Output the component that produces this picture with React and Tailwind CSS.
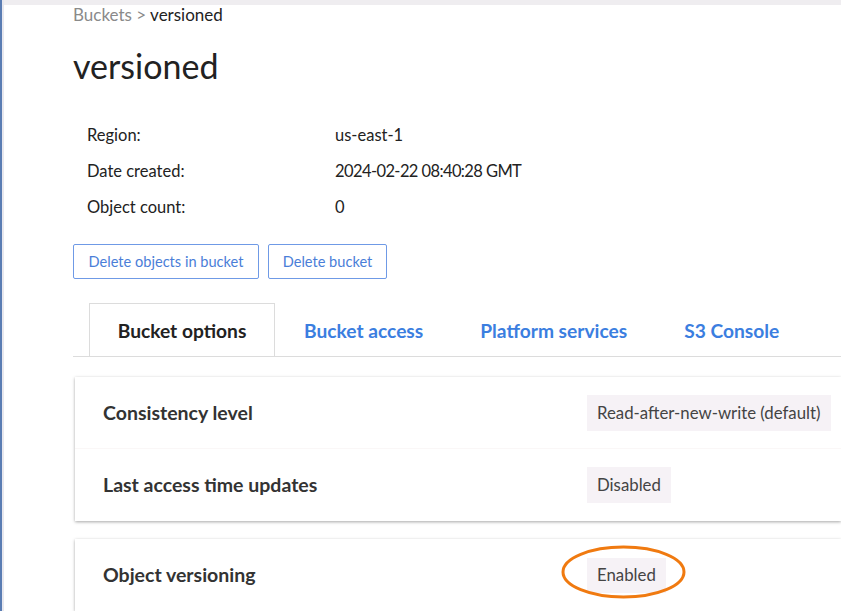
export default function App() {
  const font = { fontFamily: 'Lato, "Noto Sans", sans-serif' };
  return (
    <div className="relative h-[611px] w-[841px] overflow-hidden bg-white" style={font}>
      <div className="flex h-full">
        <div className="flex h-full w-[4px] shrink-0">
          <div className="h-full w-[2px] bg-[#5a7db3]" />
          <div className="h-full w-[2px] bg-[#e8e8ee]" />
        </div>
        <div className="flex min-w-0 flex-1 flex-col">
          <div className="h-[5px] shrink-0 bg-[#efedf0]" />
          <div className="flex flex-col pl-[69px]">
            <div className="text-[17px] leading-[19px] text-[#8a8a8a]">
              Buckets &gt; <span className="text-[#222]">versioned</span>
            </div>
            <h1 className="mt-[20px] text-[34px] leading-[44px] text-[#222]">versioned</h1>
            <div className="mt-[29px] flex flex-col pl-[14px] text-[16.5px] text-[#222]">
              {[
                ['Region:', 'us-east-1', ''],
                ['Date created:', '2024-02-22 08:40:28 GMT', 'tracking-[-0.6px]'],
                ['Object count:', '0', ''],
              ].map(([k, v, t]) => (
                <div key={k} className="flex h-[36px] items-center">
                  <div className="w-[248px]">{k}</div>
                  <div className={t}>{v}</div>
                </div>
              ))}
            </div>
            <div className="mt-[19px] flex gap-[9px]">
              <button className="h-[35px] w-[186px] rounded-[2px] border border-[#6f9ae6] text-[14.6px] text-[#4a7ed8]">
                Delete objects in bucket
              </button>
              <button className="h-[35px] w-[119px] rounded-[2px] border border-[#6f9ae6] text-[14.6px] text-[#4a7ed8]">
                Delete bucket
              </button>
            </div>
            <div className="mt-[24px] flex border-b border-[#dcdcdc] pl-[16px]">
              <div className="-mb-px flex h-[53px] w-[186px] items-center justify-center border border-b-0 border-[#dcdcdc] bg-white pt-[3px] text-[19.2px] font-bold text-[#222]">
                Bucket options
              </div>
              <div className="flex h-[53px] items-center gap-[57px] pl-[29px] pt-[3px] text-[19.2px] font-bold text-[#3b7ee0]">
                <span>Bucket access</span>
                <span>Platform services</span>
                <span>S3 Console</span>
              </div>
            </div>
            <div className="ml-[2px] mt-[20px] flex flex-col bg-white shadow-[0_1px_3px_rgba(0,0,0,0.35)]">
              <div className="flex h-[72px] items-center border-b border-[#faf7f7]">
                <div className="w-[512px] pl-[28px] text-[19.5px] font-bold text-[#333]">Consistency level</div>
                <div className="flex h-[36px] items-center bg-[#f6f2f6] px-[10px] text-[16.8px] text-[#444]">
                  Read-after-new-write (default)
                </div>
              </div>
              <div className="flex h-[72px] items-center">
                <div className="w-[512px] pl-[28px] text-[19.5px] font-bold text-[#333]">Last access time updates</div>
                <div className="flex h-[36px] items-center bg-[#f6f2f6] px-[10px] text-[16.8px] text-[#444]">
                  Disabled
                </div>
              </div>
            </div>
            <div className="ml-[2px] mt-[18px] flex flex-col bg-white shadow-[0_1px_3px_rgba(0,0,0,0.35)]">
              <div className="flex h-[72px] items-center">
                <div className="w-[512px] pl-[28px] text-[19.5px] font-bold text-[#333]">Object versioning</div>
                <div className="relative flex h-[35px] items-center bg-[#f6f2f6] px-[10px] text-[16.8px] text-[#444]">
                  Enabled
                  <svg className="absolute left-[-26px] top-[-13px]" width="125" height="54" viewBox="0 0 125 54">
                    <ellipse cx="62.5" cy="27" rx="60.5" ry="25" fill="none" stroke="#f07a10" strokeWidth="3" />
                  </svg>
                </div>
              </div>
            </div>
          </div>
        </div>
      </div>
    </div>
  );
}
